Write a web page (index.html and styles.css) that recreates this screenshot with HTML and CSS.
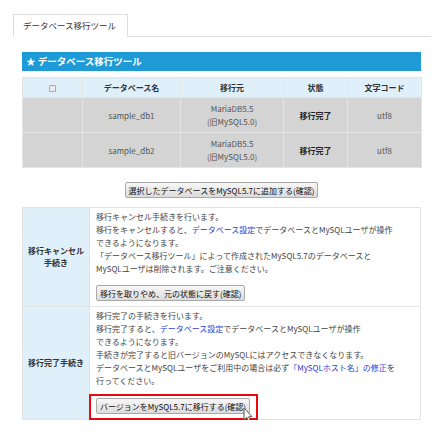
FILE: index.html
```html
<!DOCTYPE html>
<html lang="ja">
<head>
<meta charset="utf-8">
<title>データベース移行ツール</title>
<link rel="stylesheet" href="styles.css">
</head>
<body>
<div class="page">
  <div class="tabs"><div class="tab">データベース移行ツール</div></div>
  <div class="content">
    <h2 class="title">★ データベース移行ツール</h2>
    <table class="dbtable">
      <colgroup><col class="c1"><col class="c2"><col class="c3"><col class="c4"><col class="c5"></colgroup>
      <thead>
        <tr><th><span class="check"></span></th><th>データベース名</th><th>移行元</th><th>状態</th><th>文字コード</th></tr>
      </thead>
      <tbody>
        <tr><td></td><td>sample_db1</td><td>MariaDB5.5<br>(旧MySQL5.0)</td><td class="done">移行完了</td><td>utf8</td></tr>
        <tr><td></td><td>sample_db2</td><td>MariaDB5.5<br>(旧MySQL5.0)</td><td class="done">移行完了</td><td>utf8</td></tr>
      </tbody>
    </table>
    <div class="addrow"><button class="btn">選択したデータベースをMySQL5.7に追加する(確認)</button></div>
    <table class="proc">
      <tr>
        <th>移行キャンセル手続き</th>
        <td>
          <p class="desc">移行キャンセル手続きを行います。<br>移行をキャンセルすると、<a href="#">データベース設定</a>でデータベースとMySQLユーザが操作<br>できるようになります。<br>「データベース移行ツール」によって作成されたMySQL5.7のデータベースと<br>MySQLユーザは削除されます。ご注意ください。</p>
          <div class="btnwrap"><button class="btn">移行を取りやめ、元の状態に戻す(確認)</button></div>
        </td>
      </tr>
      <tr>
        <th>移行完了手続き</th>
        <td>
          <p class="desc">移行完了の手続きを行います。<br>移行完了すると、<a href="#">データベース設定</a>でデータベースとMySQLユーザが操作<br>できるようになります。<br>手続きが完了すると旧バージョンのMySQLにはアクセスできなくなります。<br>データベースとMySQLユーザをご利用中の場合は必ず<a href="#">「MySQLホスト名」の修正</a>を<br>行ってください。</p>
          <div class="btnwrap last"><button class="btn">バージョンをMySQL5.7に移行する(確認)</button><span class="highlight"></span><svg class="cursor" width="10" height="16" viewBox="0 0 10 16"><path d="M1 1 L1 13 L3.8 10.4 L5.8 14.8 L7.6 14 L5.6 9.8 L9 9.6 Z" fill="#fff" stroke="#555" stroke-width="1" stroke-linejoin="round"/></svg></div>
        </td>
      </tr>
    </table>
  </div>
</div>
</body>
</html>
```

FILE: styles.css
```css
* { box-sizing: border-box; }
body {
  margin: 0;
  background: #fff;
  color: #333;
  font-family: "Noto Sans CJK JP", "Noto Sans", sans-serif;
  font-size: 8px;
}
.page {
  padding: 14px 0 0 13px;
}
.tabs {
  width: 418px;
  height: 23px;
  border-bottom: 1px solid #dedede;
  display: flex;
}
.tab {
  width: 115px;
  height: 23px;
  border: 1px solid #dedede;
  border-bottom: none;
  background: #fff;
  font-size: 8.5px;
  line-height: 21px;
  padding-left: 9px;
  color: #333;
}
.content {
  width: 399px;
  margin: 15px 0 0 9px;
}
.title {
  margin: 0;
  height: 19px;
  background: #1e9bd7;
  color: #fff;
  font-size: 9.5px;
  font-weight: bold;
  line-height: 19px;
  padding-left: 4px;
}
.dbtable {
  margin-top: 6px;
  width: 399px;
  border-collapse: collapse;
  table-layout: fixed;
}
.c1 { width: 60px; }
.c2 { width: 98px; }
.c3 { width: 103px; }
.c4 { width: 64px; }
.c5 { width: 74px; }
.dbtable th, .dbtable td {
  border: 1px solid #e4e4e4;
  text-align: center;
  padding: 0;
  line-height: 13px;
}
.dbtable th {
  height: 20px;
  background: #dff0fa;
  font-weight: bold;
  color: #333;
}
.dbtable td {
  height: 35px;
  background: #d4d4d4;
  color: #555;
}
.dbtable td.done {
  font-weight: bold;
  color: #222;
}
.check {
  display: inline-block;
  width: 7px;
  height: 7px;
  border: 1px solid #a8a8a8;
  background: #ececec;
  border-radius: 1px;
  vertical-align: middle;
}
.addrow {
  text-align: center;
  padding: 14px 0 9px;
}
.btn {
  font-family: "Noto Sans CJK JP", "Noto Sans", sans-serif;
  font-size: 8px;
  height: 16px;
  line-height: 13px;
  padding: 0 3px;
  border: 1px solid #a9a9a9;
  border-radius: 2px;
  background: linear-gradient(#f7f7f7, #dcdcdc);
  color: #111;
  margin: 0;
}
.proc {
  width: 399px;
  border-collapse: collapse;
  table-layout: fixed;
}
.proc th {
  width: 67px;
  background: #dff0fa;
  border: 1px solid #e4e4e4;
  font-weight: bold;
  color: #333;
  padding: 0 4px;
  line-height: 12px;
  text-align: center;
}
.proc td {
  border: 1px solid #e4e4e4;
  padding: 2px 6px 5px;
  vertical-align: top;
}
.desc {
  margin: 0;
  line-height: 13px;
  white-space: nowrap;
  color: #444;
}
.desc a {
  color: #2b40d4;
  text-decoration: none;
}
.btnwrap {
  position: relative;
  display: inline-block;
  margin-top: 10px;
}
.btnwrap.last {
  margin-top: 11px;
}
.highlight {
  position: absolute;
  left: -7px;
  right: -8px;
  top: -4px;
  bottom: -6px;
  border: 2px solid #e8090f;
}
.cursor {
  position: absolute;
  left: 147px;
  top: 9px;
}
```
